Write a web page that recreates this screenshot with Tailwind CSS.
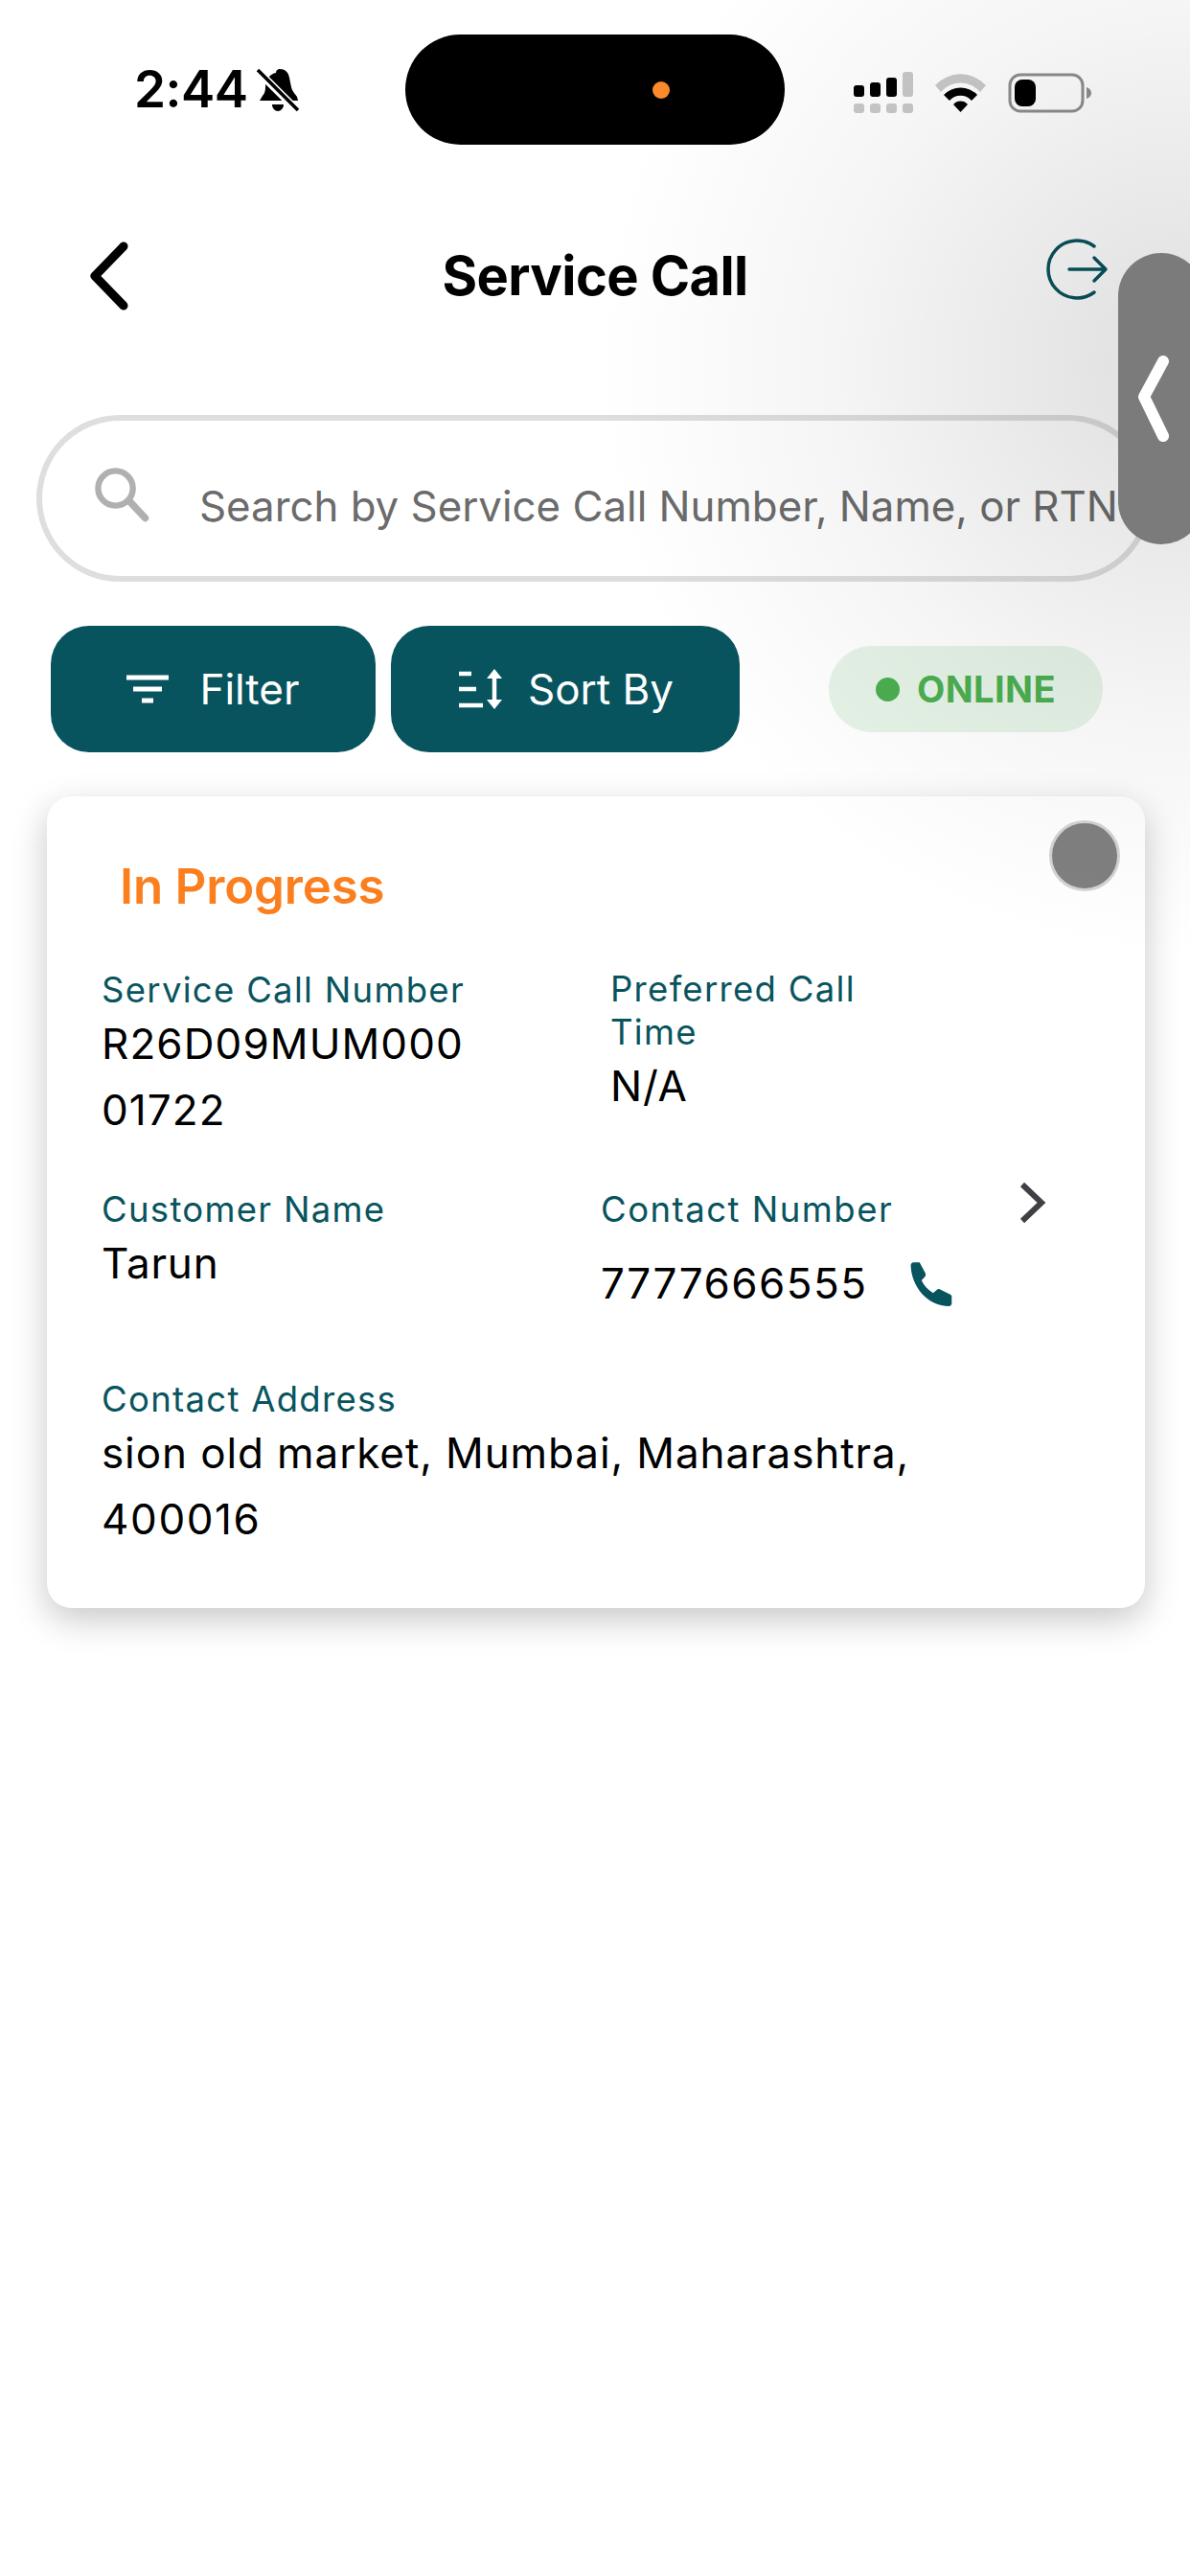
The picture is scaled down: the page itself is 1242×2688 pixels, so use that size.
<!DOCTYPE html>
<html lang="en">
  <head>
    <meta charset="UTF-8" />
    <meta name="viewport" content="width=device-width, initial-scale=1.0" />
    <title>Service Call</title>
    <script src="https://cdn.jsdelivr.net/npm/@tailwindcss/browser@4"></script>
  </head>
  <body class="bg-white font-['Inter',sans-serif] text-black">
    <div class="relative w-[1242px] h-[2688px] overflow-hidden bg-white">
      <!-- status bar -->
      <div class="flex items-start h-[152px] pl-[140px] pt-[36px]">
        <span class="w-[116px] mt-[27px] text-[53px] leading-[60px] font-semibold tracking-[-0.5px]">2:44</span>
        <svg class="w-[44px] h-[46px] ml-[12px] mt-[35px]" viewBox="0 0 44 46">
          <path d="M24 1c5 0 9 3 10 9l2 10c1 4 3 6 6 10l1 4H3l3-5c2-2 3-5 3-9 0-8 5-14 11-15 0-3 2-4 4-4z" fill="#000" />
          <path d="M16 38h12c0 4-3 7-6 7s-6-3-6-7z" fill="#000" />
          <path d="M0 2 42 44" stroke="#fff" stroke-width="8" />
          <path d="M1 2 43 44" stroke="#000" stroke-width="3.5" />
        </svg>
        <div class="flex items-center justify-end w-[396px] h-[115px] ml-[111px] pr-[120px] bg-black rounded-[58px]">
          <span class="w-[18px] h-[18px] rounded-full bg-[#fb8a2c]"></span>
        </div>
        <svg class="w-[262px] h-[60px] ml-[64px] mt-[32px]" viewBox="883 68 262 50">
          <g fill="#c9c9c9">
            <rect x="891" y="103" width="11" height="10" rx="3" />
            <rect x="908" y="103" width="11" height="10" rx="3" />
            <rect x="925" y="103" width="11" height="10" rx="3" />
            <rect x="942" y="103" width="11" height="10" rx="3" />
            <rect x="942" y="70" width="11" height="26" rx="3" />
          </g>
          <g fill="#000">
            <rect x="891" y="84" width="11" height="12" rx="3" />
            <rect x="908" y="81" width="11" height="15" rx="3" />
            <rect x="925" y="76" width="11" height="20" rx="3" />
          </g>
          <path d="M976 84a36 36 0 0 1 53 0l-6 7a27 27 0 0 0-41 0z" fill="#c9c9c9" />
          <path d="M985 94a24 24 0 0 1 35 0l-6 6a15 15 0 0 0-23 0z" fill="#000" />
          <path d="M995 104a10 10 0 0 1 15 0l-7.500 8z" fill="#000" />
          <rect x="1054" y="73" width="76" height="38" rx="11" fill="none" stroke="#8e8e8e" stroke-width="3" />
          <rect x="1059" y="78" width="22" height="28" rx="8" fill="#000" />
          <path d="M1134 86c3 1 5 3 5 6s-2 5-5 6z" fill="#8e8e8e" />
        </svg>
      </div>

      <!-- header -->
      <div class="relative flex items-center justify-center h-[136px] mt-[68px]">
        <svg class="absolute left-[88px] top-[32px] w-[50px] h-[72px]" viewBox="0 0 50 72" fill="none" stroke="#000" stroke-width="9" stroke-linecap="round" stroke-linejoin="round">
          <path d="M41 5 11 36l30 31" />
        </svg>
        <h1 class="text-[56px] leading-[64px] font-bold tracking-[-0.6px]">Service Call</h1>
        <svg class="absolute left-[1092px] top-[28px] w-[66px] h-[66px]" viewBox="0 0 66 66" fill="none" stroke="#08545e" stroke-width="3.500" stroke-linecap="round" stroke-linejoin="round">
          <path d="M50 9a30 30 0 1 0 0 48" />
          <path d="M24 33h38M50 21l12 12-12 12" />
        </svg>
      </div>

      <!-- search -->
      <div class="flex items-center w-[1164px] h-[174px] ml-[38px] mt-[77px] pl-[52px] border-[6px] border-[#dedede] rounded-[87px] overflow-hidden">
        <svg class="w-[64px] h-[64px] shrink-0 -mt-[6px]" viewBox="0 0 60 60" fill="none" stroke="#b0b0b0" stroke-linecap="round">
          <circle cx="23" cy="23" r="17" stroke-width="6" />
          <path d="M37 36 52 52" stroke-width="7" />
        </svg>
        <span class="ml-[48px] mt-[18px] text-[43.800px] leading-[50px] text-[#6b6b6b] whitespace-nowrap">Search by Service Call Number, Name, or RTN</span>
      </div>

      <!-- actions -->
      <div class="flex items-center mt-[46px] ml-[53px] h-[132px]">
        <div class="flex items-center justify-center gap-[32px] w-[339px] h-[132px] bg-[#08545e] rounded-[40px] text-white text-[44px]">
          <svg class="w-[44px] h-[30px]" viewBox="0 0 44 30" fill="none" stroke="#fff" stroke-width="5">
            <path d="M0 3h44M7 15h30M16 27h12" />
          </svg>
          <span>Filter</span>
        </div>
        <div class="flex items-center justify-center gap-[24px] w-[364px] h-[132px] ml-[16px] bg-[#08545e] rounded-[40px] text-white text-[44px]">
          <svg class="w-[50px] h-[42px]" viewBox="0 0 50 42" fill="none" stroke="#fff" stroke-width="4.500">
            <path d="M2 5h13M2 21h18M2 38h25" />
            <path d="M39 6v30" />
            <path d="M39 0l8 10H31zM39 42l8-10H31z" fill="#fff" stroke="none" />
          </svg>
          <span>Sort By</span>
        </div>
        <div class="flex items-center justify-center gap-[18px] w-[286px] h-[90px] ml-[93px] bg-[#e6f3e7] rounded-[45px] text-[#4caf50] text-[38px] font-bold tracking-[0.4px]">
          <span class="w-[25px] h-[25px] rounded-full bg-[#4caf50]"></span>
          <span>ONLINE</span>
        </div>
      </div>

      <!-- card -->
      <div class="relative w-[1146px] h-[847px] ml-[49px] mt-[46px] bg-white rounded-[26px] shadow-[0_12px_36px_rgba(0,0,0,0.22)] pl-[57px] pt-[62px]">
        <span class="absolute left-[1046px] top-[25px] w-[74px] h-[74px] rounded-full bg-[#808080] border-[3px] border-[#d4d4d4]"></span>
        <p class="ml-[19px] text-[51px] leading-[64px] font-semibold text-[#fb7f1e] tracking-[-0.2px]">In Progress</p>

        <div class="flex mt-[53px]">
          <div class="w-[531px]">
            <p class="text-[36.500px] leading-[46px] text-[#08545e] tracking-[1.300px]">Service Call Number</p>
            <p class="-mt-[1px] text-[44px] leading-[69px] tracking-[1.100px]">R26D09MUM000<br />01722</p>
          </div>
          <div class="w-[300px]">
            <p class="text-[36.500px] leading-[45px] text-[#08545e] tracking-[1.300px]">Preferred Call Time</p>
            <p class="mt-[5px] text-[44px] leading-[56px] tracking-[0.8px]">N/A</p>
          </div>
        </div>

        <div class="relative flex mt-[46px]">
          <div class="w-[521px]">
            <p class="text-[36.500px] leading-[46px] text-[#08545e] tracking-[1.300px]">Customer Name</p>
            <p class="text-[44px] leading-[66px] tracking-[0.8px]">Tarun</p>
          </div>
          <div>
            <p class="text-[36.500px] leading-[46px] text-[#08545e] tracking-[1.500px]">Contact Number</p>
            <div class="flex items-center gap-[40px] mt-[21px]">
              <p class="text-[44px] leading-[66px] tracking-[1.500px]">7777666555</p>
              <svg class="w-[50px] h-[52px]" viewBox="0 0 24 24" fill="#08545e">
                <path d="M6.600 1.500 9.500 7c.3.600.2 1.200-.2 1.700L7.600 10.600c1.200 2.600 3.200 4.800 5.800 6.300l1.800-1.600c.5-.4 1.100-.5 1.700-.2l5.100 2.500c.5.200.8.800.7 1.300v3.200c0 .8-.6 1.400-1.400 1.400C10.800 23.500 2.500 14 2.200 3c0-.8.600-1.500 1.400-1.500z" />
              </svg>
            </div>
          </div>
          <svg class="absolute left-[955px] -top-[6px] w-[32px] h-[44px]" viewBox="0 0 32 44" fill="none" stroke="#3f3f46" stroke-width="6">
            <path d="M6 3 26 22 6 41" />
          </svg>
        </div>

        <div class="mt-[65px]">
          <p class="text-[36.500px] leading-[46px] text-[#08545e] tracking-[1.300px]">Contact Address</p>
          <p class="-mt-[1px] w-[960px] text-[44px] leading-[69px] tracking-[0.9px]">sion old market, Mumbai, Maharashtra, <span class="tracking-[1.600px]">400016</span></p>
        </div>
      </div>

      <!-- soft shade in the top right corner, over the content -->
      <div class="absolute inset-0 pointer-events-none bg-[radial-gradient(ellipse_620px_620px_at_100%_380px,rgba(0,0,0,0.13),rgba(0,0,0,0.04)_60%,rgba(0,0,0,0)_100%)]"></div>

      <!-- side handle -->
      <div class="absolute left-[1167px] top-[264px] w-[90px] h-[304px] bg-[#7b7b7b] rounded-[50px]">
        <svg class="absolute left-[20px] top-[106px] w-[34px] h-[92px]" viewBox="0 0 34 92" fill="none" stroke="#fff" stroke-width="12" stroke-linecap="round" stroke-linejoin="round">
          <path d="M27 7 7 44l20 41" />
        </svg>
      </div>
    </div>
  </body>
</html>
